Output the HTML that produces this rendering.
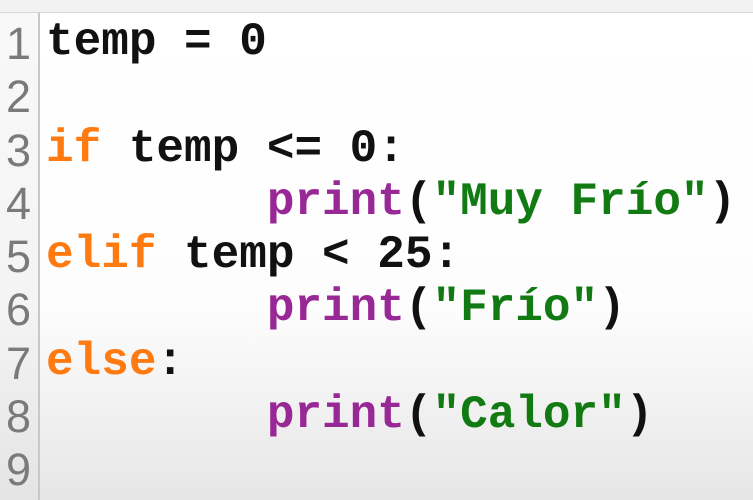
<!DOCTYPE html>
<html><head><style>
html,body{margin:0;padding:0;}
body{width:753px;height:500px;overflow:hidden;position:relative;background:#ececec;}
.top{position:absolute;left:0;top:0;width:753px;height:12px;background:#f2f2f2;border-bottom:1px solid #d8d8d8;}
.code{position:absolute;left:38px;top:13px;width:715px;height:487px;background:linear-gradient(#ffffff 0%,#fdfdfd 60%,#e6e6e6 100%);border-left:2px solid #c8c8c8;}
.gut{position:absolute;left:0;top:13px;width:38px;height:487px;background:linear-gradient(#f8f8f8 0%,#f4f4f4 60%,#e4e4e4 100%);}
.ln{position:absolute;left:6px;font-family:"Liberation Sans",sans-serif;font-size:45px;color:#7a7a7a;line-height:53.3px;top:17px;letter-spacing:-2px;}
.src{position:absolute;left:46px;top:16px;font-family:"Liberation Serif",monospace;font-family:"Liberation Mono",monospace;font-weight:bold;font-size:46px;line-height:53.3px;color:#111;white-space:pre;}
.k{color:#ff7a10}.f{color:#982895}.s{color:#127a12}
</style></head><body>
<div class="top"></div><div class="gut"></div><div class="code"></div>
<div class="ln">1<br>2<br>3<br>4<br>5<br>6<br>7<br>8<br>9</div>
<div class="src">temp = 0

<span class="k">if</span> temp &lt;= 0:
        <span class="f">print</span>(<span class="s">"Muy Frío"</span>)
<span class="k">elif</span> temp &lt; 25:
        <span class="f">print</span>(<span class="s">"Frío"</span>)
<span class="k">else</span>:
        <span class="f">print</span>(<span class="s">"Calor"</span>)
</div>
</body></html>
